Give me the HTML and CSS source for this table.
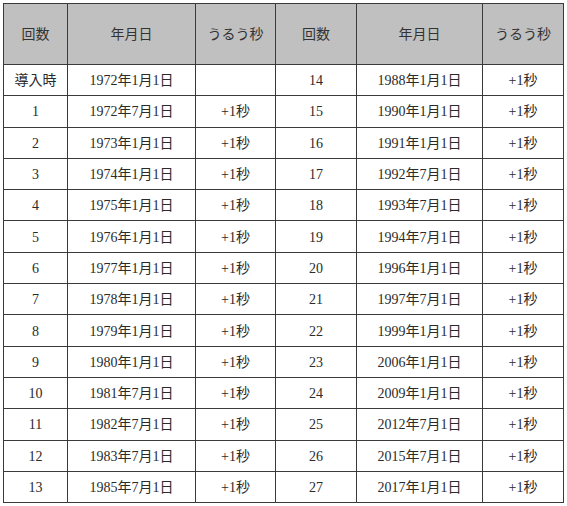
FILE: index.html
```html
<!DOCTYPE html>
<html lang="ja">
<head>
<meta charset="utf-8">
<link rel="stylesheet" href="styles.css">
</head>
<body>
<table class="leap">
<colgroup>
<col class="c1"><col class="c2"><col class="c3"><col class="c4"><col class="c5"><col class="c6">
</colgroup>
<thead>
<tr class="head"><th>回数</th><th>年月日</th><th>うるう秒</th><th>回数</th><th>年月日</th><th>うるう秒</th></tr>
</thead>
<tbody>
<tr><td>導入時</td><td>1972年1月1日</td><td></td><td>14</td><td>1988年1月1日</td><td>+1秒</td></tr>
<tr><td>1</td><td>1972年7月1日</td><td>+1秒</td><td>15</td><td>1990年1月1日</td><td>+1秒</td></tr>
<tr><td>2</td><td>1973年1月1日</td><td>+1秒</td><td>16</td><td>1991年1月1日</td><td>+1秒</td></tr>
<tr><td>3</td><td>1974年1月1日</td><td>+1秒</td><td>17</td><td>1992年7月1日</td><td>+1秒</td></tr>
<tr><td>4</td><td>1975年1月1日</td><td>+1秒</td><td>18</td><td>1993年7月1日</td><td>+1秒</td></tr>
<tr><td>5</td><td>1976年1月1日</td><td>+1秒</td><td>19</td><td>1994年7月1日</td><td>+1秒</td></tr>
<tr><td>6</td><td>1977年1月1日</td><td>+1秒</td><td>20</td><td>1996年1月1日</td><td>+1秒</td></tr>
<tr><td>7</td><td>1978年1月1日</td><td>+1秒</td><td>21</td><td>1997年7月1日</td><td>+1秒</td></tr>
<tr><td>8</td><td>1979年1月1日</td><td>+1秒</td><td>22</td><td>1999年1月1日</td><td>+1秒</td></tr>
<tr><td>9</td><td>1980年1月1日</td><td>+1秒</td><td>23</td><td>2006年1月1日</td><td>+1秒</td></tr>
<tr><td>10</td><td>1981年7月1日</td><td>+1秒</td><td>24</td><td>2009年1月1日</td><td>+1秒</td></tr>
<tr><td>11</td><td>1982年7月1日</td><td>+1秒</td><td>25</td><td>2012年7月1日</td><td>+1秒</td></tr>
<tr><td>12</td><td>1983年7月1日</td><td>+1秒</td><td>26</td><td>2015年7月1日</td><td>+1秒</td></tr>
<tr><td>13</td><td>1985年7月1日</td><td>+1秒</td><td>27</td><td>2017年1月1日</td><td>+1秒</td></tr>
</tbody>
</table>
</body>
</html>
```

FILE: styles.css
```css
html, body {
  margin: 0;
  padding: 0;
  background: #ffffff;
}
body {
  padding: 3px;
  font-family: "Liberation Serif", "Noto Sans CJK JP", serif;
  font-size: 14px;
  line-height: 18px;
  color: #2b2b2b;
}
.leap {
  border-collapse: collapse;
  table-layout: fixed;
  width: 560px;
}
.c1 { width: 64px; }
.c2 { width: 128px; }
.c3 { width: 80px; }
.c4 { width: 81px; }
.c5 { width: 126px; }
.c6 { width: 81px; }
.leap th,
.leap td {
  border: 1px solid #3a3a3a;
  text-align: center;
  vertical-align: middle;
  padding: 2px 0 0 0;
  font-weight: normal;
  white-space: nowrap;
  line-height: 18px;
}
.head th {
  background: #c0c0c0;
  height: 58px;
  color: #333333;
}
.leap tbody tr {
  height: 31.3px;
}
```
